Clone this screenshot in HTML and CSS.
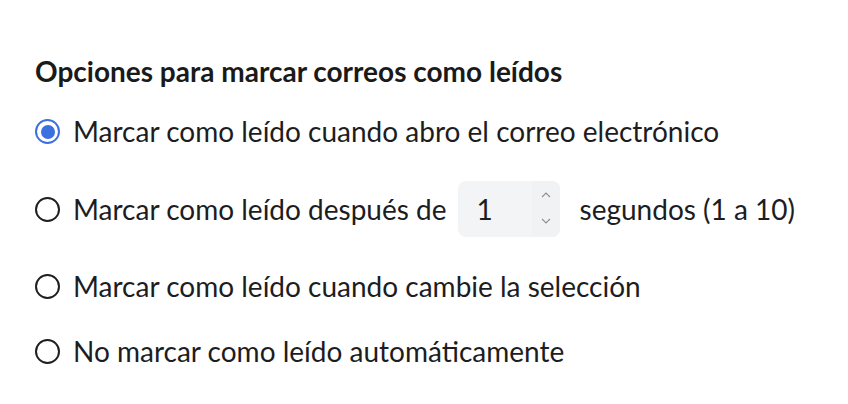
FILE: index.html
```html
<!DOCTYPE html>
<html lang="es">
<head>
<meta charset="utf-8">
<title>Opciones</title>
<link rel="stylesheet" href="styles.css">
</head>
<body>
<section class="panel">
  <h2 class="title">Opciones para marcar correos como leídos</h2>
  <div class="options">
    <label class="option">
      <span class="radio checked"></span>
      <span class="label">Marcar como leído cuando abro el correo electrónico</span>
    </label>
    <label class="option option-input">
      <span class="radio"></span>
      <span class="label">Marcar como leído después de</span>
      <span class="number">
        <span class="value">1</span>
        <span class="spin">
          <svg width="10" height="6" viewBox="0 0 10 6"><path d="M1 5 L5 1 L9 5" fill="none" stroke="#8d9096" stroke-width="1.1"/></svg>
          <svg width="10" height="6" viewBox="0 0 10 6"><path d="M1 1 L5 5 L9 1" fill="none" stroke="#8d9096" stroke-width="1.1"/></svg>
        </span>
      </span>
      <span class="label after">segundos (1 a 10)</span>
    </label>
    <label class="option">
      <span class="radio"></span>
      <span class="label">Marcar como leído cuando cambie la selección</span>
    </label>
    <label class="option">
      <span class="radio"></span>
      <span class="label">No marcar como leído automáticamente</span>
    </label>
  </div>
</section>
</body>
</html>
```

FILE: styles.css
```css
* { box-sizing: border-box; }
html, body {
  margin: 0;
  padding: 0;
  background: #ffffff;
}
body {
  font-family: Lato, "Open Sans", sans-serif;
  color: #1d1d1f;
}
.panel {
  padding: 55px 0 0 35px;
}
.title {
  margin: 0;
  font-size: 28px;
  font-weight: 700;
  line-height: 32px;
  color: #1a1a1a;
}
.options {
  display: flex;
  flex-direction: column;
  gap: 34px;
  margin-top: 29px;
}
.option {
  display: flex;
  align-items: center;
  height: 31px;
  font-size: 28px;
  line-height: 31px;
}
.option-input {
  height: 56px;
}
.radio {
  flex: none;
  width: 25px;
  height: 25px;
  border: 2px solid #1f1f1f;
  border-radius: 50%;
  margin-right: 13px;
  position: relative;
}
.radio.checked {
  border-color: #3c6fe0;
}
.radio.checked::after {
  content: "";
  position: absolute;
  left: 3.5px;
  top: 3.5px;
  width: 14px;
  height: 14px;
  border-radius: 50%;
  background: #3c6fe0;
}
.number {
  display: flex;
  width: 102px;
  height: 56px;
  margin-left: 11px;
  margin-right: 20px;
  border-radius: 8px;
  background: #f3f4f5;
  overflow: hidden;
}
.value {
  flex: 1;
  padding-left: 19px;
  line-height: 56px;
}
.spin {
  width: 28px;
  display: flex;
  flex-direction: column;
  align-items: center;
  justify-content: space-between;
  padding: 11px 0 13px;
  background: #f1f2f4;
}
.spin svg { display: block; }
```
